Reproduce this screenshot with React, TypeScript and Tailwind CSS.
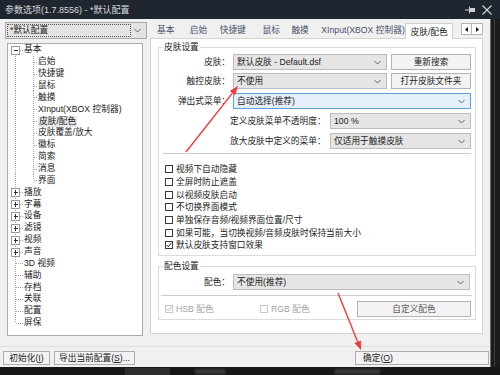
import React from "react";

const FONT = "font-['Liberation_Sans','Noto_Sans_CJK_SC',sans-serif]";

function Chevron() {
  return (
    <svg width="7" height="5" viewBox="0 0 7 5" className="shrink-0">
      <path d="M0.5 1 L3.5 4 L6.5 1" fill="none" stroke="#666" strokeWidth="1" />
    </svg>
  );
}

function Dropdown({ text, className, active = false }: { text: string; className: string; active?: boolean }) {
  return (
    <div
      className={`${className} h-[16px] flex items-center pl-[3px] pr-[5px] border ${
        active ? "border-[#5aa0de] bg-[#e6f0fa]" : "border-[#bcbcbc] bg-[#e5e5e5]"
      }`}
    >
      <span className="flex-1 whitespace-nowrap leading-[13px]">{text}</span>
      <Chevron />
    </div>
  );
}

function Btn({ children, className }: { children: React.ReactNode; className: string }) {
  return (
    <div className={`${className} h-[16px] border border-[#b3b3b3] bg-[#f3f3f3] flex items-center justify-center leading-[13px] whitespace-nowrap`}>
      {children}
    </div>
  );
}

function Check({ checked = false, disabled = false }: { checked?: boolean; disabled?: boolean }) {
  return (
    <span
      className={`w-[8px] h-[8px] shrink-0 border bg-white flex items-center justify-center ${
        disabled ? "border-[#c8c8c8]" : "border-[#3a3a3a]"
      }`}
    >
      {checked && (
        <svg width="6" height="6" viewBox="0 0 6 6">
          <path d="M0.5 3 L2.3 4.8 L5.5 0.8" fill="none" stroke={disabled ? "#b4b4b4" : "#222"} strokeWidth="1" />
        </svg>
      )}
    </span>
  );
}

type Node = {
  label: string;
  kind: "top" | "child";
  exp?: "+" | "-";
  first?: boolean;
  last?: boolean;
  lastChild?: boolean;
  selected?: boolean;
};

const RH = 11.87;

function TreeLines({ n }: { n: Node }) {
  const line = "#a5a5a5";
  if (n.kind === "top") {
    return (
      <svg width="15" height={RH} viewBox={`0 0 15 ${RH}`} className="shrink-0" shapeRendering="crispEdges">
        <line x1="7.5" y1={n.first ? 6 : 0} x2="7.5" y2={n.last ? 6 : RH} stroke={line} strokeDasharray="1 1" />
        <line x1="8" y1="6.5" x2="15" y2="6.5" stroke={line} strokeDasharray="1 1" />
        {n.exp && (
          <g>
            <rect x="3.5" y="2.5" width="8" height="8" fill="white" stroke="#9a9a9a" />
            <line x1="5.5" y1="6.5" x2="10" y2="6.5" stroke="#333" />
            {n.exp === "+" && <line x1="7.5" y1="4.5" x2="7.5" y2="9" stroke="#333" />}
          </g>
        )}
      </svg>
    );
  }
  return (
    <svg width="30" height={RH} viewBox={`0 0 30 ${RH}`} className="shrink-0" shapeRendering="crispEdges">
      <line x1="7.5" y1="0" x2="7.5" y2={RH} stroke={line} strokeDasharray="1 1" />
      <line x1="25.5" y1="0" x2="25.5" y2={n.lastChild ? 6 : RH} stroke={line} strokeDasharray="1 1" />
      <line x1="26" y1="6.5" x2="30" y2="6.5" stroke={line} strokeDasharray="1 1" />
    </svg>
  );
}

const TREE: Node[] = [
  { label: "基本", kind: "top", exp: "-", first: true },
  { label: "启始", kind: "child" },
  { label: "快捷键", kind: "child" },
  { label: "鼠标", kind: "child" },
  { label: "触摸", kind: "child" },
  { label: "XInput(XBOX 控制器)", kind: "child" },
  { label: "皮肤/配色", kind: "child", selected: true },
  { label: "皮肤覆盖/放大", kind: "child" },
  { label: "徽标", kind: "child" },
  { label: "简索", kind: "child" },
  { label: "消息", kind: "child" },
  { label: "界面", kind: "child", lastChild: true },
  { label: "播放", kind: "top", exp: "+" },
  { label: "字幕", kind: "top", exp: "+" },
  { label: "设备", kind: "top", exp: "+" },
  { label: "滤镜", kind: "top", exp: "+" },
  { label: "视频", kind: "top", exp: "+" },
  { label: "声音", kind: "top", exp: "+" },
  { label: "3D 视频", kind: "top" },
  { label: "辅助", kind: "top" },
  { label: "存档", kind: "top" },
  { label: "关联", kind: "top" },
  { label: "配置", kind: "top" },
  { label: "屏保", kind: "top", last: true },
];

const CHECKS: { label: string; checked?: boolean }[] = [
  { label: "视频下自动隐藏" },
  { label: "全屏时防止遮盖" },
  { label: "以视频皮肤启动" },
  { label: "不切换界面模式" },
  { label: "单独保存音频/视频界面位置/尺寸" },
  { label: "如果可能，当切换视频/音频皮肤时保持当前大小" },
  { label: "默认皮肤支持窗口效果", checked: true },
];

export default function App() {
  return (
    <div className={`${FONT} relative w-[500px] h-[375px] overflow-hidden bg-[#161616] text-[8.7px] text-[#222] flex flex-col`}>
      {/* Title bar */}
      <div className="h-[19px] shrink-0 bg-[#1f2630] flex items-center pl-[5px] pr-[8px]">
        <span className="text-[#dadada] text-[9px] leading-[12px] whitespace-nowrap">参数选项(1.7.8556) - *默认配置</span>
        <div className="ml-auto flex items-center gap-[6px]">
          <svg width="11" height="8" viewBox="0 0 11 8">
            <line x1="0" y1="4" x2="5" y2="4" stroke="#cfcfcf" strokeWidth="1" />
            <line x1="4.5" y1="0.5" x2="4.5" y2="7.5" stroke="#cfcfcf" strokeWidth="1" />
            <rect x="5" y="2" width="5" height="4" fill="#cfcfcf" />
          </svg>
          <svg width="10" height="10" viewBox="0 0 10 10">
            <path d="M0.5 0.5 L9.5 9.5 M9.5 0.5 L0.5 9.5" stroke="#d6d6d6" strokeWidth="1.1" />
          </svg>
        </div>
      </div>

      {/* Window body */}
      <div className="flex h-[348px] shrink-0">
        <div className="w-[491px] bg-[#f0f0f0] border-r border-[#6e6e6e] flex flex-col">
          <div className="flex h-[317px] shrink-0">
            {/* Left column */}
            <div className="w-[150px] pl-[5px] pt-[3px] flex flex-col">
              <div className="w-[142px] h-[17px] border border-[#a9a9a9] bg-[#e3e3e3] flex items-center pl-[1px] pr-[5px]">
                <div className="w-[124px] h-[13px] border border-dotted border-[#555] flex items-center pl-[2px] leading-[11px] whitespace-nowrap">
                  *默认配置
                </div>
                <div className="ml-auto">
                  <Chevron />
                </div>
              </div>
              <div className="mt-[4px] ml-[2px] w-[136px] h-[293px] border border-[#acacac] bg-white overflow-hidden">
                {TREE.map((n) => (
                  <div key={n.label} className="flex items-center h-[11.87px]">
                    <TreeLines n={n} />
                    <span
                      className={`leading-[11px] whitespace-nowrap ${n.kind === "top" ? "ml-[1px]" : ""} ${
                        n.selected ? "bg-[#e6e6e6] px-[1px]" : ""
                      }`}
                    >
                      {n.label}
                    </span>
                  </div>
                ))}
              </div>
            </div>

            {/* Right column */}
            <div className="w-[333px] pt-[3px] flex flex-col">
              <div className="h-[16px] flex items-stretch text-[#46516a]">
                <div className="w-[33px] pl-[7px] flex items-center leading-[12px] whitespace-nowrap">基本</div>
                <div className="w-[30px] pl-[7px] flex items-center leading-[12px] whitespace-nowrap">启始</div>
                <div className="w-[42px] pl-[7px] flex items-center leading-[12px] whitespace-nowrap">快捷键</div>
                <div className="w-[30px] pl-[8px] flex items-center leading-[12px] whitespace-nowrap">鼠标</div>
                <div className="w-[30px] pl-[7px] flex items-center leading-[12px] whitespace-nowrap">触摸</div>
                <div className="w-[90px] pl-[7px] flex items-center leading-[12px] whitespace-nowrap">XInput(XBOX 控制器)</div>
                <div className="ml-[1px] mt-[1px] w-[48px] h-[16px] border border-b-0 border-[#cfcfcf] bg-white relative z-10 flex items-center justify-center leading-[12px] whitespace-nowrap text-[#222]">
                  皮肤/配色
                </div>
                <div className="ml-[8px] mt-[1px] w-[22px] h-[12px] flex">
                  <div className="w-[11px] h-[12px] border border-[#b5b5b5] bg-white flex items-center justify-center">
                    <svg width="3" height="5" viewBox="0 0 3 5">
                      <path d="M3 0 L0 2.5 L3 5 Z" fill="#111" />
                    </svg>
                  </div>
                  <div className="w-[11px] h-[12px] border border-l-0 border-[#b5b5b5] bg-white flex items-center justify-center">
                    <svg width="3" height="5" viewBox="0 0 3 5">
                      <path d="M0 0 L3 2.5 L0 5 Z" fill="#111" />
                    </svg>
                  </div>
                </div>
              </div>

              {/* Tab panel */}
              <div className="h-[296px] border border-[#d3d3d3] bg-white pt-[8px] pl-[7px]">
                {/* Skin settings group */}
                <div className="relative w-[318px] h-[209px] border border-[#dcdcdc] flex flex-col pt-[6px]">
                  <span className="absolute -top-[6px] left-[4px] bg-white px-[1px] leading-[11px]">皮肤设置</span>
                  <div className="flex items-center h-[16px]">
                    <span className="w-[71px] text-right whitespace-nowrap leading-[12px]">皮肤：</span>
                    <Dropdown className="ml-[3px] w-[154px]" text="默认皮肤 - Default.dsf" />
                    <Btn className="ml-[4px] w-[80px]">重新搜索</Btn>
                  </div>
                  <div className="flex items-center h-[16px] mt-[3px]">
                    <span className="w-[71px] text-right whitespace-nowrap leading-[12px]">触控皮肤：</span>
                    <Dropdown className="ml-[3px] w-[154px]" text="不使用" />
                    <Btn className="ml-[4px] w-[80px]">打开皮肤文件夹</Btn>
                  </div>
                  <div className="flex items-center h-[16px] mt-[4px]">
                    <span className="w-[71px] text-right whitespace-nowrap leading-[12px]">弹出式菜单：</span>
                    <Dropdown className="ml-[3px] w-[238px]" text="自动选择(推荐)" active />
                  </div>
                  <div className="flex items-center h-[16px] mt-[4px]">
                    <span className="ml-[71px] w-[96px] whitespace-nowrap leading-[12px]">定义皮肤菜单不透明度：</span>
                    <Dropdown className="ml-[4px] w-[141px]" text="100 %" />
                  </div>
                  <div className="flex items-center h-[16px] mt-[4px]">
                    <span className="ml-[71px] w-[96px] whitespace-nowrap leading-[12px]">放大皮肤中定义的菜单：</span>
                    <Dropdown className="ml-[4px] w-[141px]" text="仅适用于触摸皮肤" />
                  </div>
                  <div className="mt-[4px] ml-[4px] w-[308px] border-t border-[#cdcdcd]" />
                  <div className="mt-[9px] flex flex-col">
                    {CHECKS.map((c) => (
                      <div key={c.label} className="h-[12.7px] flex items-center pl-[6px]">
                        <Check checked={c.checked} />
                        <span className="ml-[3px] leading-[12px] whitespace-nowrap">{c.label}</span>
                      </div>
                    ))}
                  </div>
                </div>

                {/* Color settings group */}
                <div className="relative mt-[10px] w-[318px] h-[54px] border border-[#dcdcdc] flex flex-col pt-[7px]">
                  <span className="absolute -top-[6px] left-[4px] bg-white px-[1px] leading-[11px]">配色设置</span>
                  <div className="flex items-center h-[16px]">
                    <span className="w-[71px] text-right whitespace-nowrap leading-[12px]">配色：</span>
                    <Dropdown className="ml-[3px] w-[237px]" text="不使用(推荐)" />
                  </div>
                  <div className="mt-[5px] ml-[2px] w-[311px] border-t border-[#cdcdcd]" />
                  <div className="mt-[5px] flex items-center h-[16px] pl-[6px] text-[#a3a3a3]">
                    <div className="w-[95px] flex items-center">
                      <Check checked disabled />
                      <span className="ml-[3px] leading-[12px] whitespace-nowrap">HSB 配色</span>
                    </div>
                    <div className="w-[97px] flex items-center">
                      <Check disabled />
                      <span className="ml-[3px] leading-[12px] whitespace-nowrap">RGB 配色</span>
                    </div>
                    <Btn className="w-[114px] text-[#5a5a5a]">自定义配色</Btn>
                  </div>
                </div>
              </div>
            </div>
          </div>

          {/* Bottom bar */}
          <div className="flex-1 flex flex-col">
            <div className="mt-[10px] border-t border-[#e0e0e0] flex items-start pt-[4px] pl-[3px] pr-[1px]">
              <div className="w-[47px] h-[14px] border border-[#adadad] bg-[#f3f3f3] flex items-center justify-center leading-[12px] whitespace-nowrap">
                初始化(<span className="underline">I</span>)
              </div>
              <div className="ml-[4px] w-[81px] h-[14px] border border-[#adadad] bg-[#f3f3f3] flex items-center justify-center leading-[12px] whitespace-nowrap">
                导出当前配置(<span className="underline">S</span>)...
              </div>
              <div className="ml-auto w-[134px] h-[14px] border border-[#adadad] bg-[#f3f3f3] flex items-center pl-[7px] leading-[12px] whitespace-nowrap">
                确定(<span className="underline">O</span>)
              </div>
            </div>
          </div>
        </div>
        <div className="flex-1 bg-[#1c1c1c] flex">
          <div className="ml-[3px] w-px bg-[#3d3d3d]" />
        </div>
      </div>

      {/* Bottom dark strip */}
      <div className="flex-1 bg-[#171717] flex items-start">
        <div className="ml-[125px] mt-[1px] w-[45px] h-[8px] bg-[#2c2c2c]" />
        <div className="ml-[25px] mt-[2px] w-[30px] h-[5px] bg-[#3a3a3a] blur-[1px]" />
        <div className="ml-[110px] mt-[2px] w-[45px] h-[5px] bg-[#3a3a3a] blur-[1px]" />
      </div>

      {/* Red annotation arrows */}
      <svg className="absolute left-0 top-0 pointer-events-none" width="500" height="375" viewBox="0 0 500 375">
        <line x1="186" y1="152" x2="232.4" y2="93.1" stroke="#f03a3a" strokeWidth="1.4" />
        <polygon points="238,86 235.2,95.2 229.7,90.9" fill="#f03a3a" />
        <line x1="338" y1="293" x2="357.6" y2="341.7" stroke="#f03a3a" strokeWidth="1.4" />
        <polygon points="361,350 354.4,343 360.9,340.4" fill="#f03a3a" />
      </svg>
    </div>
  );
}
